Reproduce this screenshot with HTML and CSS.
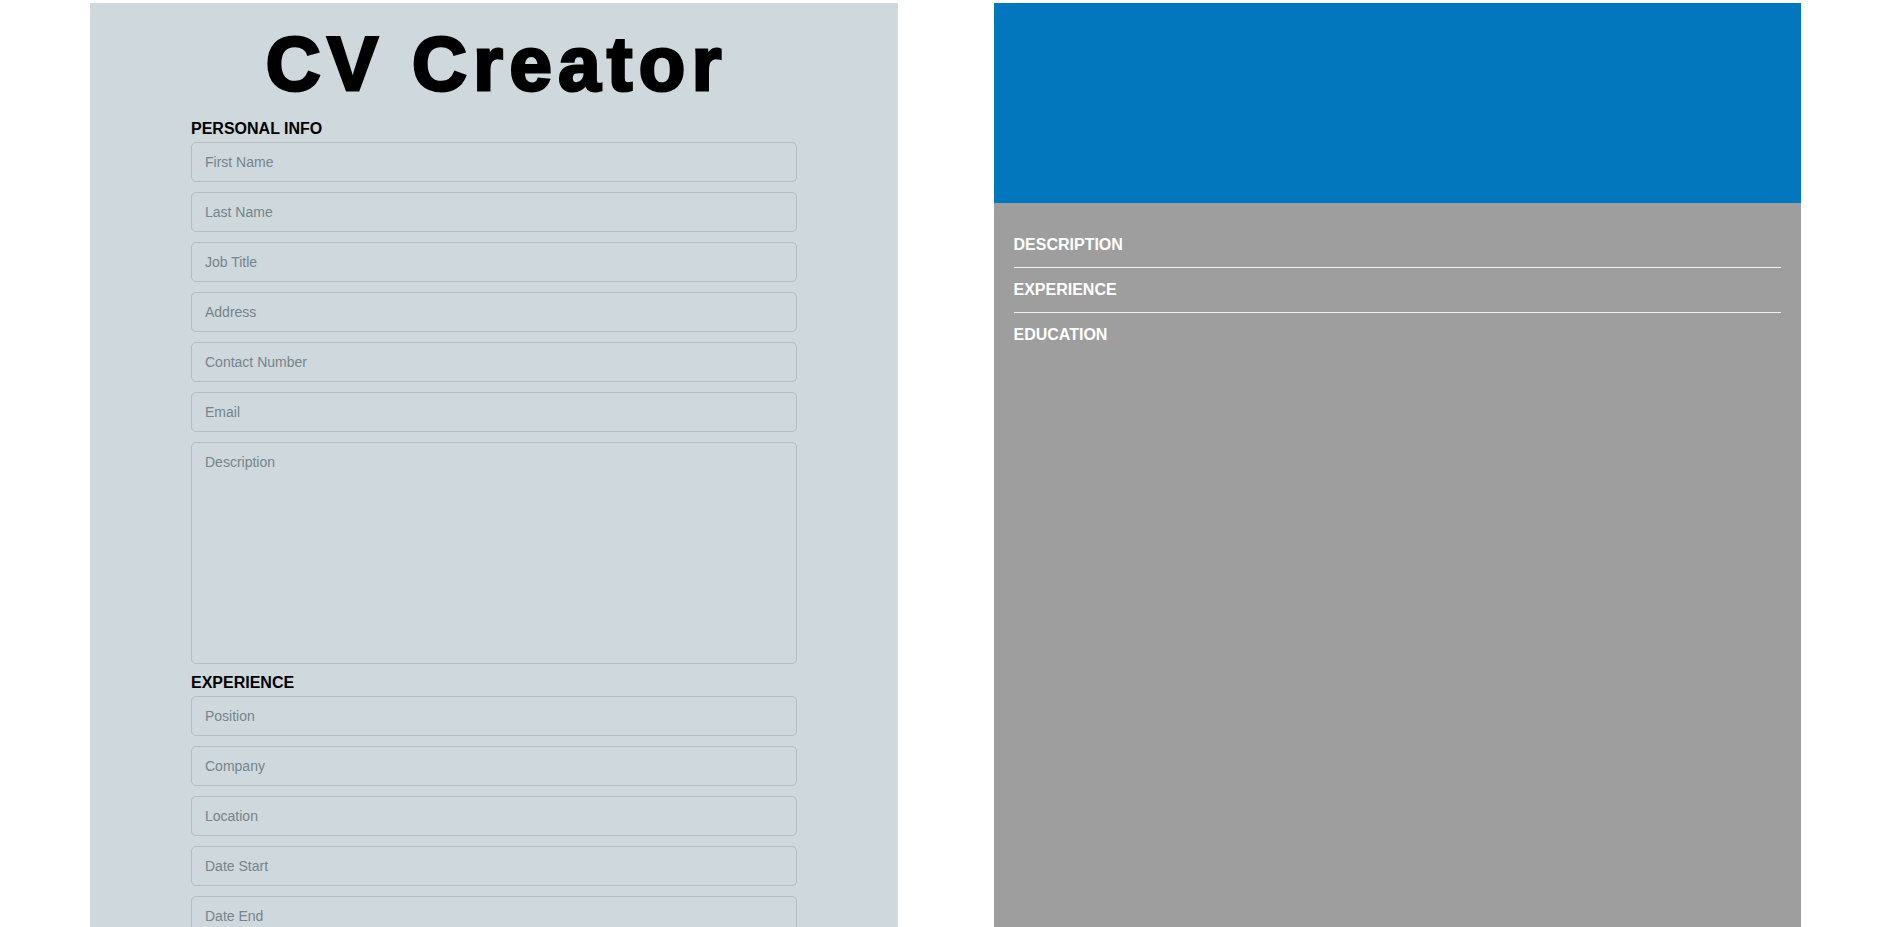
FILE: index.html
```html
<!DOCTYPE html>
<html lang="en">
<head>
<meta charset="utf-8">
<title>CV Creator</title>
<link rel="stylesheet" href="styles.css">
</head>
<body>
<div class="page">
  <section class="editor">
    <h1 class="title">CV Creator</h1>
    <form class="form">
      <h2 class="form-heading">PERSONAL INFO</h2>
      <input class="field" type="text" placeholder="First Name">
      <input class="field" type="text" placeholder="Last Name">
      <input class="field" type="text" placeholder="Job Title">
      <input class="field" type="text" placeholder="Address">
      <input class="field" type="text" placeholder="Contact Number">
      <input class="field" type="text" placeholder="Email">
      <textarea class="field field-area" placeholder="Description"></textarea>
      <h2 class="form-heading">EXPERIENCE</h2>
      <input class="field" type="text" placeholder="Position">
      <input class="field" type="text" placeholder="Company">
      <input class="field" type="text" placeholder="Location">
      <input class="field" type="text" placeholder="Date Start">
      <input class="field" type="text" placeholder="Date End">
      <h2 class="form-heading">EDUCATION</h2>
      <input class="field" type="text" placeholder="University Name">
      <input class="field" type="text" placeholder="City">
      <input class="field" type="text" placeholder="Degree">
      <input class="field" type="text" placeholder="Date Start">
      <input class="field" type="text" placeholder="Date End">
    </form>
  </section>
  <section class="preview">
    <header class="preview-header"></header>
    <div class="preview-body">
      <div class="preview-section"><h3 class="preview-heading">DESCRIPTION</h3></div>
      <div class="preview-section"><h3 class="preview-heading">EXPERIENCE</h3></div>
      <div class="preview-section"><h3 class="preview-heading">EDUCATION</h3></div>
    </div>
  </section>
</div>
</body>
</html>
```
FILE: styles.css
```css
html, body {
  margin: 0;
  padding: 0;
  background: #ffffff;
}

body {
  font-family: "Liberation Sans", Arial, sans-serif;
}

.page {
  display: grid;
  grid-template-columns: 1fr 1fr;
  gap: 96px;
  padding: 3px 94px 0 90px;
  align-items: stretch;
}

.editor {
  min-width: 0;
  background: #cfd8dc;
  padding: 22px 101px 60px;
}

.title {
  margin: 0 0 17px;
  padding-left: 6px;
  text-align: center;
  font-size: 76px;
  line-height: 78px;
  font-weight: 700;
  letter-spacing: 6.5px;
  -webkit-text-stroke: 3px #000;
  color: #000;
}

.form {
  display: flex;
  flex-direction: column;
}

.form-heading {
  margin: 0 0 4px;
  font-size: 16px;
  line-height: 18px;
  font-weight: 700;
  color: #000;
}

.field {
  box-sizing: border-box;
  width: 100%;
  height: 40px;
  margin: 0 0 10px;
  padding: 0 13px;
  border: 1px solid #b2bec4;
  border-radius: 5px;
  background: #cfd8dc;
  font-family: "Liberation Sans", Arial, sans-serif;
  font-size: 14px;
  color: #333;
  outline: none;
}

.field::placeholder {
  color: #75848d;
}

.field-area {
  height: 222px;
  padding: 11px 13px;
  resize: none;
}

.preview {
  min-width: 0;
  background: #9e9e9e;
  min-height: 960px;
}

.preview-header {
  height: 200px;
  background: #0277bd;
}

.preview-body {
  padding: 20px;
}

.preview-section {
  padding: 13px 0;
  border-bottom: 1px solid #f0f0f0;
}

.preview-section:last-child {
  border-bottom: none;
}

.preview-heading {
  margin: 0;
  font-size: 16px;
  line-height: 18px;
  font-weight: 700;
  color: #ffffff;
}
```
